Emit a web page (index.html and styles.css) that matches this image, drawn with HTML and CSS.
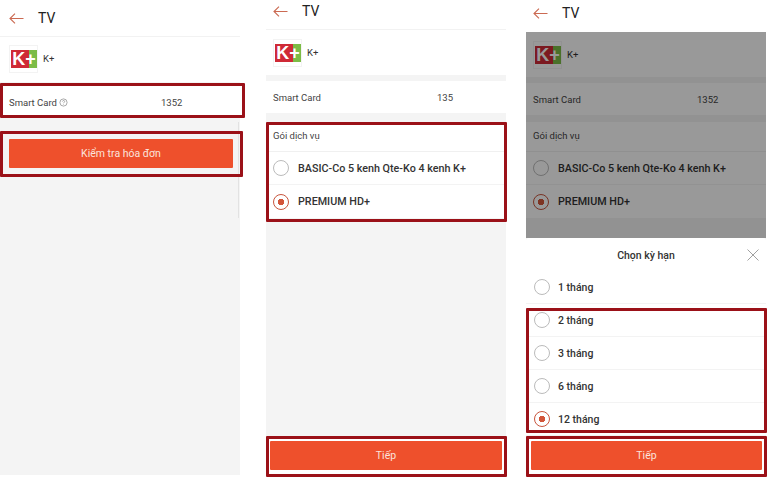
FILE: index.html
```html
<!DOCTYPE html>
<html lang="vi">
<head>
<meta charset="UTF-8">
<meta name="viewport" content="width=device-width, initial-scale=1.0">
<title>TV</title>
<link rel="stylesheet" href="styles.css">
</head>
<body>

<div class="screens">

    <!-- Buoc 1 -->
    <section class="phone phone-one">
        <header class="topbar">
            <svg class="back" viewBox="0 0 15 11"><path d="M14.5 5.5H1M6 .7 1 5.5l5 4.8"/></svg>
            <span class="topbar-title">TV</span>
        </header>
        <div class="provider">
            <div class="logo"><span class="logo-text">K+</span></div>
            <span class="provider-name">K+</span>
        </div>
        <div class="card-row">
            <span class="card-label">Smart Card</span>
            <svg class="hint" viewBox="0 0 10 10"><circle cx="5" cy="5" r="4"/><path d="M3.8 4c0-1.6 2.5-1.6 2.5-.1 0 1-1.3 1-1.3 2M5 7v.6"/></svg>
            <span class="card-value">1352</span>
        </div>
        <div class="check-area">
            <button class="btn">Kiểm tra hóa đơn</button>
        </div>
        <div class="edge-line"></div>
        <div class="mark mark-card"></div>
        <div class="mark mark-check"></div>
    </section>

    <!-- Buoc 2 -->
    <section class="phone phone-two">
        <header class="topbar">
            <svg class="back" viewBox="0 0 15 11"><path d="M14.5 5.5H1M6 .7 1 5.5l5 4.8"/></svg>
            <span class="topbar-title">TV</span>
        </header>
        <div class="provider">
            <div class="logo"><span class="logo-text">K+</span></div>
            <span class="provider-name">K+</span>
        </div>
        <div class="card-row">
            <span class="card-label">Smart Card</span>
            <span class="card-value">135</span>
        </div>
        <div class="package">
            <div class="package-title">Gói dịch vụ</div>
            <div class="option"><span class="radio"></span>BASIC-Co 5 kenh Qte-Ko 4 kenh K+</div>
            <div class="option"><span class="radio checked"></span>PREMIUM HD+</div>
        </div>
        <div class="spacer"></div>
        <footer class="bottom">
            <button class="btn">Tiếp</button>
        </footer>
        <div class="mark mark-package"></div>
        <div class="mark mark-next"></div>
    </section>

    <!-- Buoc 3 -->
    <section class="phone phone-three">
        <header class="topbar">
            <svg class="back" viewBox="0 0 15 11"><path d="M14.5 5.5H1M6 .7 1 5.5l5 4.8"/></svg>
            <span class="topbar-title">TV</span>
        </header>
        <div class="dimmed">
            <div class="provider">
                <div class="logo"><span class="logo-text">K+</span></div>
                <span class="provider-name">K+</span>
            </div>
            <div class="card-row">
                <span class="card-label">Smart Card</span>
                <span class="card-value">1352</span>
            </div>
            <div class="package">
                <div class="package-title">Gói dịch vụ</div>
                <div class="option"><span class="radio"></span>BASIC-Co 5 kenh Qte-Ko 4 kenh K+</div>
                <div class="option"><span class="radio checked"></span>PREMIUM HD+</div>
            </div>
        </div>
        <div class="sheet">
            <div class="sheet-head">
                <span>Chọn kỳ hạn</span>
                <svg class="close" viewBox="0 0 12 12"><path d="M.5.5l11 11M11.5.5l-11 11"/></svg>
            </div>
            <div class="option"><span class="radio"></span>1 tháng</div>
            <div class="option"><span class="radio"></span>2 tháng</div>
            <div class="option"><span class="radio"></span>3 tháng</div>
            <div class="option"><span class="radio"></span>6 tháng</div>
            <div class="option"><span class="radio checked"></span>12 tháng</div>
            <footer class="bottom">
                <button class="btn">Tiếp</button>
            </footer>
        </div>
        <div class="mark mark-terms"></div>
        <div class="mark mark-next"></div>
    </section>

</div>

</body>
</html>
```

FILE: styles.css
```css
/* Chung */
body {
    margin: 0;
    height: 478px;
    overflow: hidden;
    background-color: #fff;
    font-family: Roboto, "Liberation Sans", sans-serif;
    color: #333;
}
.screens {
    display: flex;
    height: 478px;
}
.phone {
    position: relative;
    display: flex;
    flex-direction: column;
    flex: none;
    width: 240px;
    height: 478px;
    background-color: #f4f4f4;
}
.phone-one {
    height: 475px;
}
.phone-two {
    margin-left: 26px;
}
.phone-three {
    margin-left: 20px;
}

/* Thanh tieu de */
.topbar {
    display: flex;
    align-items: center;
    flex: none;
    height: 36px;
    padding-left: 9px;
    background-color: #fff;
    border-bottom: 1px solid #f2f2f2;
    box-sizing: content-box;
}
.phone-two .topbar {
    height: 22px;
    padding-bottom: 7px;
    padding-left: 7px;
}
.phone-three .topbar {
    height: 26px;
    padding-bottom: 6px;
    padding-left: 7px;
    border-bottom: none;
}
.back {
    width: 15px;
    height: 11px;
    fill: none;
    stroke: #cb6a52;
    stroke-width: 1.1;
}
.topbar-title {
    margin-left: 14px;
    font-size: 14px;
    color: #222;
}

/* Nha cung cap */
.provider {
    display: flex;
    align-items: center;
    flex: none;
    height: 45px;
    padding-left: 7px;
    background-color: #fff;
}
.phone-one .provider {
    padding-left: 9px;
    padding-bottom: 2px;
    height: 43px;
}
.logo {
    display: flex;
    align-items: center;
    width: 26px;
    height: 26px;
    padding: 0 0 0 1px;
    border: 1px solid #f3f3f3;
    box-sizing: content-box;
}
.logo-text {
    display: block;
    width: 100%;
    height: 18px;
    background: linear-gradient(90deg, #cf2a36 0 70%, #7cbc46 70%);
    color: #fff;
    font-family: "Liberation Sans", sans-serif;
    font-size: 18px;
    font-weight: bold;
    line-height: 18px;
    text-align: center;
}
.provider-name {
    margin-left: 5px;
    font-size: 9.5px;
}

/* Smart Card */
.card-row {
    display: flex;
    align-items: center;
    flex: none;
    height: 32px;
    margin-top: 6px;
    padding-left: 7px;
    background-color: #fff;
    font-size: 9.5px;
    color: #444;
    white-space: nowrap;
}
.phone-one .card-row {
    margin-top: 4px;
    padding-left: 9px;
}
.card-label {
    width: 164px;
}
.phone-one .card-label {
    width: 47px;
}
.hint {
    flex: none;
    width: 9px;
    height: 9px;
    margin: 0 93px 0 3px;
    fill: none;
    stroke: #888;
    stroke-width: .8;
}
.check-area {
    flex: 1;
    padding: 21px 7px 0 9px;
}
.edge-line {
    position: absolute;
    top: 122px;
    left: 238px;
    width: 1px;
    height: 96px;
    background-color: #e2e2e2;
}

/* Goi dich vu */
.package {
    flex: none;
    margin-top: 9px;
    background-color: #fff;
}
.phone-three .package {
    margin-top: 7px;
}
.package-title {
    height: 30px;
    padding-left: 7px;
    font-size: 9.5px;
    line-height: 28px;
    color: #444;
    border-bottom: 1px solid #f0f0f0;
    box-sizing: border-box;
}
.option {
    display: flex;
    align-items: center;
    height: 33px;
    padding-left: 7px;
    border-bottom: 1px solid #f3f3f3;
    box-sizing: border-box;
    font-size: 10.5px;
    font-weight: 500;
    color: #333;
}
.package .option {
    font-size: 10.75px;
}
.option:last-child {
    border-bottom: none;
}
.radio {
    flex: none;
    width: 16px;
    height: 16px;
    margin-right: 9px;
    border: 1px solid #bbb;
    border-radius: 50%;
    box-sizing: border-box;
}
.radio.checked {
    border-color: #c8553d;
    background: radial-gradient(circle, #d2553a 0 3px, #fff 3.5px);
}
.spacer {
    flex: 1;
}

/* Botoes */
.bottom {
    flex: none;
    padding: 4px 4px 8px;
    background-color: #fff;
}
.btn {
    display: block;
    width: 100%;
    height: 29px;
    padding: 0;
    border: none;
    border-radius: 1px;
    background-color: #ee502c;
    color: #fbe3dc;
    font-family: inherit;
    font-size: 10.5px;
}

/* Phan lam mo */
.dimmed {
    position: relative;
    flex: none;
    height: 206px;
    overflow: hidden;
}
.dimmed::after {
    content: "";
    position: absolute;
    inset: 0;
    background-color: rgba(0, 0, 0, 0.4);
}
.sheet {
    display: flex;
    flex-direction: column;
    flex: 1;
    background-color: #fff;
    border-radius: 3px 3px 0 0;
}
.sheet-head {
    position: relative;
    display: flex;
    align-items: center;
    justify-content: center;
    flex: none;
    height: 33px;
    padding-top: 1px;
    box-sizing: border-box;
    font-size: 10.5px;
    font-weight: 500;
}
.sheet .option {
    flex: none;
    padding-left: 8px;
}
.sheet .option .radio {
    margin-right: 8px;
}
.sheet .bottom {
    margin-top: auto;
    padding-left: 5px;
}
.close {
    position: absolute;
    top: 11px;
    right: 7px;
    width: 12px;
    height: 12px;
    fill: none;
    stroke: #888;
    stroke-width: .8;
}

/* Khung danh dau */
.mark {
    position: absolute;
    border: 3px solid #9b1118;
    border-radius: 1px;
    box-sizing: border-box;
}
.mark-card {
    top: 83px;
    left: 0;
    width: 245px;
    height: 35px;
}
.mark-check {
    top: 131px;
    left: 0;
    width: 243px;
    height: 46px;
}
.mark-package {
    top: 122px;
    left: 0;
    width: 241px;
    height: 100px;
}
.mark-terms {
    top: 308px;
    left: 0;
    width: 241px;
    height: 125px;
}
.mark-next {
    top: 436px;
    left: 0;
    width: 241px;
    height: 41px;
}
```
